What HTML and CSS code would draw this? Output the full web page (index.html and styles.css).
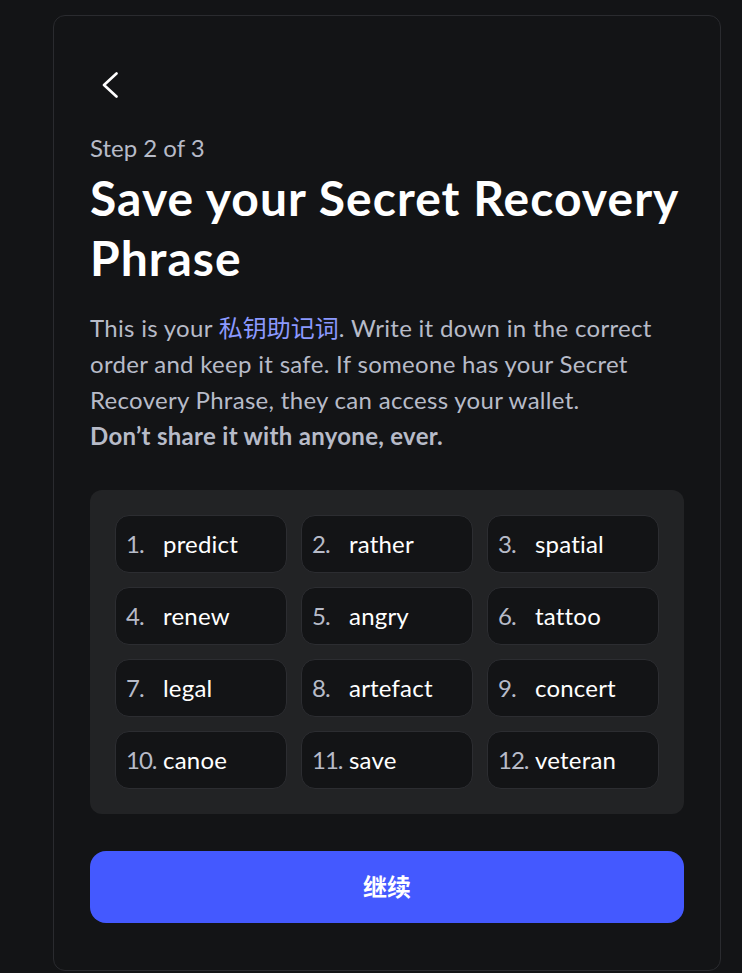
FILE: index.html
```html
<!DOCTYPE html>
<html lang="en">
<head>
<meta charset="utf-8">
<title>Save your Secret Recovery Phrase</title>
<link rel="stylesheet" href="styles.css">
</head>
<body>
<div class="card">
  <div class="nav">
    <button class="back" aria-label="Back">
      <svg width="16" height="26" viewBox="0 0 16 26" fill="none">
        <path d="M14.5 1.5 L2 13 L14.5 24.5" stroke="#ffffff" stroke-width="2.6" stroke-linecap="round" stroke-linejoin="round"/>
      </svg>
    </button>
  </div>
  <div class="step">Step 2 of 3</div>
  <h1 class="title">Save your Secret Recovery Phrase</h1>
  <p class="desc">This is your <span class="link">私钥助记词</span>. Write it down in the correct order and keep it safe. If someone has your Secret Recovery Phrase, they can access your wallet.<br><strong class="warn">Don’t share it with anyone, ever.</strong></p>
  <div class="words">
    <div class="word"><span class="num">1.</span><span class="txt">predict</span></div>
    <div class="word"><span class="num">2.</span><span class="txt">rather</span></div>
    <div class="word"><span class="num">3.</span><span class="txt">spatial</span></div>
    <div class="word"><span class="num">4.</span><span class="txt">renew</span></div>
    <div class="word"><span class="num">5.</span><span class="txt">angry</span></div>
    <div class="word"><span class="num">6.</span><span class="txt">tattoo</span></div>
    <div class="word"><span class="num">7.</span><span class="txt">legal</span></div>
    <div class="word"><span class="num">8.</span><span class="txt">artefact</span></div>
    <div class="word"><span class="num">9.</span><span class="txt">concert</span></div>
    <div class="word"><span class="num">10.</span><span class="txt">canoe</span></div>
    <div class="word"><span class="num">11.</span><span class="txt">save</span></div>
    <div class="word"><span class="num">12.</span><span class="txt">veteran</span></div>
  </div>
  <button class="continue">继续</button>
</div>
</body>
</html>
```

FILE: styles.css
```css
html, body {
  margin: 0;
  padding: 0;
  background: #131416;
}
body {
  font-family: "Lato", "Noto Sans CJK SC", sans-serif;
  color: #ffffff;
  overflow: hidden;
}
.card {
  box-sizing: border-box;
  margin: 15px 0 0 53px;
  width: 668px;
  height: 956px;
  border: 1px solid #2a2b2f;
  border-radius: 12px;
  background: #131416;
  padding: 36px 36px 36px 36px;
}
.nav {
  height: 66px;
  display: flex;
  align-items: center;
  padding-left: 12px;
}
.back {
  background: none;
  border: 0;
  padding: 0;
  margin: 0;
  display: flex;
  cursor: pointer;
}
.step {
  margin-top: 12px;
  font-size: 24px;
  line-height: 36px;
  color: #b7bbc8;
}
.title {
  margin: 2px 0 0 0;
  font-size: 48px;
  line-height: 60px;
  font-weight: 700;
  letter-spacing: 1.05px;
  color: #ffffff;
}
.desc {
  margin: 22px 0 0 0;
  font-size: 24px;
  line-height: 36px;
  letter-spacing: 0.3px;
  color: #b7bbc8;
}
.link {
  color: #8b99ff;
  letter-spacing: 0;
}
.warn {
  font-weight: 700;
}
.words {
  margin-top: 36px;
  background: #222325;
  border-radius: 12px;
  padding: 25px;
  display: grid;
  grid-template-columns: repeat(3, 172px);
  grid-auto-rows: 58px;
  gap: 14px;
}
.word {
  box-sizing: border-box;
  background: #131416;
  border: 1px solid #2c2d31;
  border-radius: 14px;
  display: flex;
  align-items: center;
  padding: 0 0 2px 10px;
  font-size: 24px;
}
.num {
  width: 37px;
  letter-spacing: -1px;
  color: #b7bbc8;
}
.txt {
  color: #ffffff;
  letter-spacing: 0.2px;
}
.continue {
  margin-top: 37px;
  width: 100%;
  height: 72px;
  border: 0;
  border-radius: 16px;
  background: #4459ff;
  color: #ffffff;
  font-family: "Noto Sans CJK SC", sans-serif;
  font-size: 24px;
  font-weight: 700;
  padding: 0 0 4px 0;
  display: block;
  cursor: pointer;
}
```
